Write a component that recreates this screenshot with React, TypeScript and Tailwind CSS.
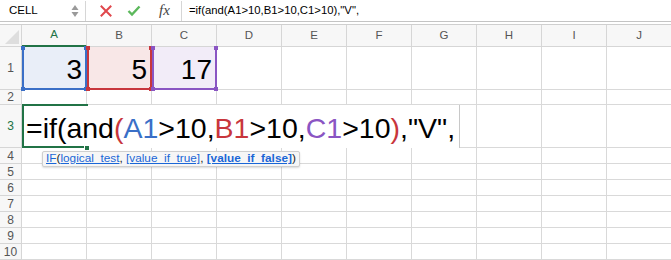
import React from 'react'

const COLS = ['A', 'B', 'C', 'D', 'E', 'F', 'G', 'H', 'I', 'J']
const ROWS = [1, 2, 3, 4, 5, 6, 7, 8, 9, 10]

const FORMULA = '=if(and(A1>10,B1>10,C1>10),"V",'

// range highlight box drawn over a referenced cell
function RangeBox({ color, fill }: { color: string; fill: string }) {
  return (
    <div className="absolute left-0 top-0 right-[-1px] bottom-[-1px] z-[5]" style={{ backgroundColor: fill }}>
      <div className="absolute left-0 top-0 bottom-0 w-[2px]" style={{ backgroundColor: color }} />
      <div className="absolute right-0 top-0 bottom-0 w-[2px]" style={{ backgroundColor: color }} />
      <div className="absolute left-0 right-0 bottom-0 h-[2px]" style={{ backgroundColor: color }} />
      <div className="absolute left-[-1px] top-[-1px] w-[4px] h-[4px]" style={{ backgroundColor: color }} />
      <div className="absolute right-[-1px] top-[-1px] w-[4px] h-[4px]" style={{ backgroundColor: color }} />
      <div className="absolute left-[-1px] bottom-[-1px] w-[4px] h-[4px]" style={{ backgroundColor: color }} />
      <div className="absolute right-[-1px] bottom-[-1px] w-[4px] h-[4px]" style={{ backgroundColor: color }} />
    </div>
  )
}

function BigNum({ value }: { value: string }) {
  return (
    <div className="relative z-[6] h-full flex items-end justify-end pr-[4px] pb-[5px] text-[28px] leading-none text-black">
      {value}
    </div>
  )
}

function Editor() {
  return (
    <>
      <div className="absolute left-0 top-0 w-[438px] h-[43px] bg-white border-r border-[#c8c8c8] z-10 flex items-end pl-[4px] pb-[6px] text-[28.5px] leading-none text-black whitespace-nowrap">
        <span>=if(and</span>
        <span className="text-[#c8363c]">(</span>
        <span className="text-[#3a6fc7]">A1</span>
        <span>&gt;10,</span>
        <span className="text-[#c8363c]">B1</span>
        <span>&gt;10,</span>
        <span className="text-[#8a55c3]">C1</span>
        <span>&gt;10</span>
        <span className="text-[#c8363c]">)</span>
        <span>,"V",</span>
      </div>
      {/* active cell outline, right side hidden under the edit text */}
      <div className="absolute left-0 top-[-1px] w-[66px] h-[44px] border-2 border-r-0 border-[#217346] z-[11]" />
      <div className="absolute left-[62px] top-[40px] w-[6px] h-[6px] bg-[#217346] border border-white z-[12]" />
      {/* function tooltip */}
      <div className="absolute left-[20px] top-[46px] h-[16px] px-[3px] flex items-center bg-[#f6f6f6] border border-[#cfcfcf] rounded-[2px] shadow-[0_1px_2px_rgba(0,0,0,0.15)] z-20 text-[11.8px] leading-none whitespace-nowrap text-[#222]">
        <span className="text-[#1a66d6] underline">IF</span>
        <span>(</span>
        <span className="text-[#1a66d6] underline">logical_test</span>
        <span>,&nbsp;</span>
        <span className="text-[#1a66d6] underline">[value_if_true]</span>
        <span>,&nbsp;</span>
        <span className="text-[#1a66d6] underline font-bold">[value_if_false]</span>
        <span>)</span>
      </div>
    </>
  )
}

export default function App() {
  return (
    <div className="w-[671px] h-[260px] overflow-hidden bg-white font-['Liberation_Sans',Arial,sans-serif]">
      {/* Formula bar */}
      <div className="h-[22px] flex items-center border-b border-[#c4c4c4] text-black">
        <div className="w-[85px] h-full flex items-center pl-[9px] pr-[6px]">
          <span className="text-[11.5px] flex-1">CELL</span>
          <svg width="8" height="16" viewBox="0 0 8 16">
            <path d="M4 2 L7.5 7 L0.5 7 Z" fill="#9a9a9a" />
            <path d="M4 14 L7.5 9 L0.5 9 Z" fill="#9a9a9a" />
          </svg>
        </div>
        <div className="w-px h-[20px] bg-[#d6d6d6]" />
        <div className="w-[95px] h-full flex items-center">
          <svg className="ml-[14px]" width="12" height="12" viewBox="0 0 12 12">
            <path d="M1.5 1.5 L10.5 10.5 M10.5 1.5 L1.5 10.5" stroke="#e0474c" strokeWidth="2" strokeLinecap="square" />
          </svg>
          <svg className="ml-[15px]" width="14" height="12" viewBox="0 0 14 12">
            <path d="M1.5 6 L5 9.5 L12.5 1.5" stroke="#5cb85c" strokeWidth="2.4" fill="none" />
          </svg>
          <span className="ml-[18px] text-[15px] italic font-['Liberation_Serif',serif] text-[#444] leading-none">fx</span>
        </div>
        <div className="w-px h-[20px] bg-[#d6d6d6]" />
        <span className="ml-[7px] text-[11.3px] whitespace-nowrap">{FORMULA}</span>
      </div>
      <div className="h-[3px] border-b border-[#cfcfcf]" />

      {/* Grid */}
      <div className="grid grid-cols-[22px_repeat(10,65px)] grid-rows-[22px_43px_15px_43px_repeat(7,16px)]">
        <div className="relative bg-[#f7f7f7] border-r border-b border-[#d6d6d6] overflow-hidden">
          <div className="absolute right-[2px] bottom-[2px] w-0 h-0 border-l-[14px] border-l-transparent border-b-[14px] border-b-[#dedede]" />
        </div>
        {COLS.map(c => (
          <div
            key={c}
            className={`flex items-center justify-center bg-[#f7f7f7] border-r border-[#d6d6d6] text-[11.5px] ${
              c === 'A' ? 'text-[#217346] border-b-2 border-b-[#217346]' : 'text-[#555] border-b'
            }`}
          >
            {c}
          </div>
        ))}
        {ROWS.map(r => (
          <React.Fragment key={r}>
            <div
              className={`flex items-center justify-center bg-[#f7f7f7] border-r border-b border-[#d6d6d6] text-[12px] leading-none ${
                r === 3 ? 'text-[#217346]' : 'text-[#555]'
              }`}
            >
              {r}
            </div>
            {COLS.map(c => (
              <div key={c + r} className="relative border-r border-b border-[#d9d9d9]">
                {r === 1 && c === 'A' && (
                  <>
                    <RangeBox color="#3a6fc7" fill="#e9eef8" />
                    <BigNum value="3" />
                  </>
                )}
                {r === 1 && c === 'B' && (
                  <>
                    <RangeBox color="#c8363c" fill="#f8e7e7" />
                    <BigNum value="5" />
                  </>
                )}
                {r === 1 && c === 'C' && (
                  <>
                    <RangeBox color="#8a55c3" fill="#f2ecf8" />
                    <BigNum value="17" />
                  </>
                )}
                {r === 3 && c === 'A' && <Editor />}
              </div>
            ))}
          </React.Fragment>
        ))}
      </div>
    </div>
  )
}
